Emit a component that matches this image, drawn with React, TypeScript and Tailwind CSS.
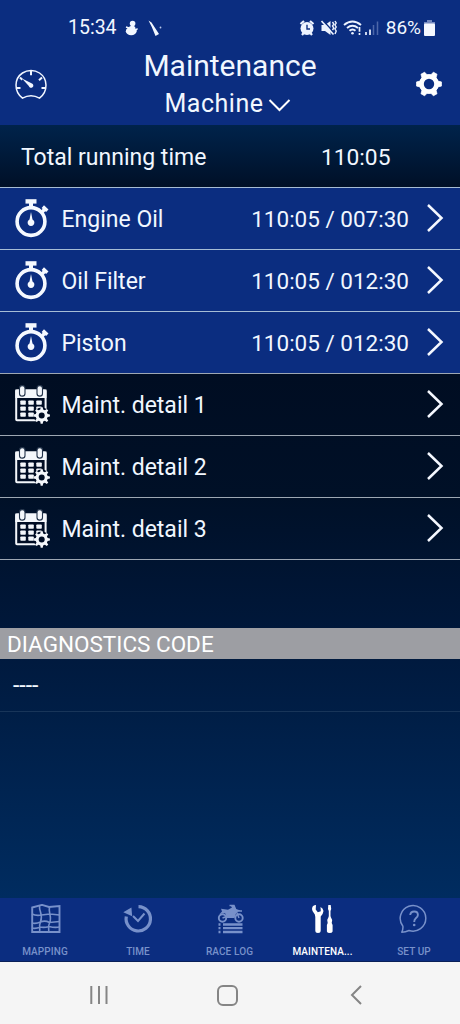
import React from "react";

const gearPoints = (cx: number, cy: number, teeth: number, outer: number, inner: number) => {
  const pts: string[] = [];
  const step = (Math.PI * 2) / teeth;
  for (let i = 0; i < teeth; i++) {
    const a = i * step;
    const corners: [number, number][] = [
      [inner, -0.3],
      [outer, -0.16],
      [outer, 0.16],
      [inner, 0.3],
    ];
    corners.forEach(([r, o]) => {
      pts.push(`${(cx + r * Math.cos(a + o * step)).toFixed(2)},${(cy + r * Math.sin(a + o * step)).toFixed(2)}`);
    });
  }
  return pts.join(" ");
};

function SnowmanIcon() {
  return (
    <svg className="ml-[8.5px] h-4 w-3.5" viewBox="0 0 14 16" fill="#f2f7ff">
      <circle cx="7.600" cy="3.600" r="2.800" />
      <path d="M4.500 6.500Q8 5 10.200 7Q11 9 9.500 10L4.500 9.500Q3 8 4.500 6.500Z" />
      <ellipse cx="6.200" cy="11.200" rx="5.400" ry="4" />
      <path d="M1 7L4 8M10 11L12.500 8.500" stroke="#f2f7ff" strokeWidth="1.500" />
    </svg>
  );
}

function WandIcon() {
  return (
    <svg className="ml-2 h-4 w-4" viewBox="0 0 16 16">
      <path d="M1.500 .5L4.500 2.500L12 14L8.500 16L4.800 7Z" fill="#f2f7ff" />
      <circle cx="13.500" cy="7.500" r=".9" fill="#b9c8ea" />
    </svg>
  );
}

function StatusIcons() {
  return (
    <svg className="h-5 w-20" viewBox="0 0 80 20" fill="none" stroke="#edf3ff">
      <circle cx="8" cy="10.500" r="6.500" fill="#edf3ff" stroke="none" />
      <path d="M1.500 6L5 3M14.500 6L11 3M3 17L4.800 14.700M13 17L11.200 14.700" strokeWidth="2.200" />
      <path d="M8 6.800V11H11" stroke="#0b2d80" strokeWidth="1.400" />
      <path d="M22.500 7H26L31.500 3V17L26 13H22.500Z" fill="#edf3ff" stroke="none" />
      <path d="M24 2.500L35 14.500" stroke="#0b2d80" strokeWidth="1.500" />
      <path d="M22.500 3L34.500 16.500" strokeWidth="1.700" />
      <path d="M33.500 4L34.800 6L33.500 8L34.800 10L33.500 12M36 3L37.200 5L36 7L37.200 9L36 11L37.200 13L36 16" strokeWidth="1.400" />
      <path d="M45 7Q53.500 0 62 7M48 10Q53.500 5.500 59 10M50.500 12.800Q53.500 10 56.500 12.800" strokeWidth="1.900" />
      <circle cx="53.500" cy="15.300" r="1.300" fill="#edf3ff" stroke="none" />
      <path d="M60.500 9V13.700M60.500 15V17" strokeWidth="1.700" />
      <path d="M67 14V17M71 11.500V17" strokeWidth="1.700" />
      <path d="M74.500 7V17M78.500 3.500V17" stroke="#4d67a9" strokeWidth="1.500" />
    </svg>
  );
}

function BatteryIcon() {
  return (
    <svg className="ml-[3px] h-4 w-[11px]" viewBox="0 0 11 16">
      <path d="M3 0H8V2H11V5H0V2H3Z" fill="#7388be" />
      <rect y="3.500" width="11" height="12.500" rx="1" fill="#f5f8ff" />
    </svg>
  );
}

function GaugeIcon() {
  return (
    <svg className="h-8 w-8" viewBox="0 0 32 32" fill="none" stroke="#f1f6ff" strokeWidth="1.500">
      <path d="M7.500 29.200C-1.500 22 -.8 9.500 7.500 4C12.500 .6 19.500 .6 24.500 4C32.800 9.500 33.500 22 24.500 29.200Q16 24.200 7.500 29.200Z" strokeLinejoin="round" />
      <path d="M16 2V6.300M1.500 19H5.500M26.500 19H30.500M5 8.500L7.300 10.700M27 8.500L24 11.300" strokeWidth="2" />
      <path d="M7 9.500L17 14.400A2.300 2.300 0 1 1 13.800 17Z" fill="#f1f6ff" stroke="none" />
    </svg>
  );
}

function SettingsIcon() {
  return (
    <svg className="h-[26px] w-[26px]" viewBox="0 0 26 26">
      <circle cx="13" cy="13" r="9.800" fill="white" />
      <polygon points={gearPoints(13, 13, 6, 12.6, 9.4)} fill="white" stroke="white" strokeWidth=".8" strokeLinejoin="round" />
      <circle cx="13" cy="13" r="5.200" fill="#0b2d80" />
    </svg>
  );
}

function StopwatchIcon() {
  return (
    <svg className="mb-0.5 h-10 w-[34px]" viewBox="0 0 34 40" fill="none" stroke="#f5f9ff">
      <circle cx="16" cy="23.500" r="13.900" strokeWidth="3.600" />
      <path d="M10.500 3.400H21.500" strokeWidth="4.400" />
      <path d="M16 5V10" strokeWidth="4" />
      <path d="M27.800 8.600L32.300 12.800M29 12L27 14" strokeWidth="3.500" />
      <path d="M16 14L17.500 21.500A3.400 3.400 0 1 1 14.500 21.500Z" fill="#f5f9ff" stroke="none" />
    </svg>
  );
}

function CalendarIcon() {
  return (
    <svg className="mb-px h-[39px] w-[35px]" viewBox="0 0 35 39">
      <rect x="1.200" y="5.500" width="29.400" height="29.800" rx=".8" fill="#000d24" stroke="#f4f7fb" strokeWidth="2" />
      <path d="M.3 4.500H31.500V13H.3Z" fill="#f4f7fb" />
      <rect x="4.500" y=".6" width="5.500" height="10.500" rx="2.700" fill="#f4f7fb" stroke="#23334a" strokeWidth="1.100" />
      <rect x="22" y=".6" width="5.500" height="10.500" rx="2.700" fill="#f4f7fb" stroke="#23334a" strokeWidth="1.100" />
      {[15.5, 21.5, 27.5].map((y) =>
        [5.3, 13.3, 21.3].map((x) => <rect key={`${x}-${y}`} x={x} y={y} width="5.500" height="4.200" rx=".8" fill="#f4f7fb" />)
      )}
      <circle cx="26.700" cy="30.500" r="8" fill="#000d24" />
      <polygon points={gearPoints(26.7, 30.5, 8, 8.3, 6.1)} fill="#f4f7fb" />
      <circle cx="26.700" cy="30.500" r="3" fill="#000d24" />
    </svg>
  );
}

function MapIcon() {
  return (
    <svg className="ml-0.5 h-[30px] w-[30px]" viewBox="0 0 30 30" fill="none" stroke="currentColor" strokeWidth="1.600">
      <path d="M1.200 3.500L11 .9L18 3L28.500 2V28H1.200Z" strokeWidth="1.900" />
      <path d="M8.500 2C8 8 12.500 10 9.500 18C7.500 22 9.500 25 8.500 28M18.500 3C17 9 21.500 13 18.500 19C16.500 23 18.500 26 17.500 28M1 10Q5 12 10.500 11L19 10L28.500 11M1 19Q5 20 9.500 18Q14 16 18.500 18.500L28.500 17.500M1 24Q5 25 9 23Q13 24 18 22.500Q24 24 28.500 23" />
    </svg>
  );
}

function TimeIcon() {
  return (
    <svg className="h-[30px] w-[30px]" viewBox="0 0 30 30" fill="none" stroke="currentColor">
      <path d="M15.500 2.600A12.200 12.200 0 1 1 3.300 12.500" strokeWidth="3.200" />
      <path d="M.3 8.200L8.400 3.500L9.200 12.200Z" fill="currentColor" stroke="none" />
      <path d="M10 12L15 17L21.500 9.500" strokeWidth="2" />
    </svg>
  );
}

function RaceIcon() {
  return (
    <svg className="ml-0.5 h-[30px] w-[30px]" viewBox="0 0 30 30" fill="none" stroke="currentColor">
      <circle cx="6.500" cy="14" r="3.700" strokeWidth="1.900" />
      <circle cx="23" cy="14" r="3.700" strokeWidth="1.900" />
      <path d="M5 4.800L12 5.800L16 3.500L14.500 1.500H17.500L20 5L24.500 6.500L20.500 8L18.500 14H11L9 9L3.500 10L6 7.500Z" fill="currentColor" stroke="none" />
      <path d="M13.500 1.500H18L23 14M12 12L6.500 14M20 7H26" strokeWidth="1.500" />
      <path d="M2.500 20.500H4.500M2.500 24.200H4.500M2.500 28H4.500M7 20.500H26.500M7 24.200H26.500M7 28H26.500" strokeWidth="2.300" />
    </svg>
  );
}

function ToolsIcon() {
  return (
    <svg className="mr-0.5 h-[30px] w-[30px]" viewBox="0 0 30 30" fill="currentColor">
      <path d="M9 1C4.800 1 4 5.500 6.500 8.500Q8.300 10 8.300 13V26.500Q8.300 29 11 29Q13.700 29 13.700 26.500V12.500Q16 10.500 16.500 7Q16 4 13.500 3L13.800 7.200L10.800 8.200L8.700 5.500Z" />
      <path d="M21.300 1H23.700L24.200 5L23.500 7V13H21.800V7L21 5Z" />
      <path d="M21.800 12.500H23.500L25.200 16L24.700 19L25.600 21V27.500Q25 29 22.800 29Q20.300 29 19.900 27.500V21L20.700 19L20.200 16Z" />
    </svg>
  );
}

function HelpIcon() {
  return (
    <svg className="h-[30px] w-[30px]" viewBox="0 0 30 30" fill="none" stroke="currentColor" strokeWidth="1.500">
      <path d="M3.900 22.200A12.800 12.800 0 1 1 10 26.500Q6.500 28 2.800 28.200Q4.200 25.500 3.900 22.200Z" strokeLinejoin="round" />
      <path d="M11.200 11Q11.600 7.500 15.200 7.500Q18.900 7.500 18.900 10.900Q18.900 12.600 16.800 14.200Q15.200 15.400 15.200 18" strokeWidth="1.900" />
      <circle cx="15.200" cy="21" r="1.300" fill="currentColor" stroke="none" />
    </svg>
  );
}

function Chevron() {
  return (
    <svg className="mb-0.5 h-[30px] w-[18px]" viewBox="0 0 18 30" fill="none" stroke="#f5f8ff" strokeWidth="2.500">
      <path d="M2 2L15.500 15L2 28" />
    </svg>
  );
}

interface Item {
  label: string;
  value?: string;
}

const items: Item[] = [
  { label: "Engine Oil", value: "110:05 / 007:30" },
  { label: "Oil Filter", value: "110:05 / 012:30" },
  { label: "Piston", value: "110:05 / 012:30" },
  { label: "Maint. detail 1" },
  { label: "Maint. detail 2" },
  { label: "Maint. detail 3" },
];

const tabs = [
  { label: "MAPPING", icon: <MapIcon />, style: "w-[90px] text-[#7891ca]" },
  { label: "TIME", icon: <TimeIcon />, style: "w-24 text-[#7891ca]" },
  { label: "RACE LOG", icon: <RaceIcon />, style: "w-[87px] text-[#7891ca]" },
  { label: "MAINTENA...", icon: <ToolsIcon />, style: "w-[99px] text-white" },
  { label: "SET UP", icon: <HelpIcon />, style: "w-[84px] text-[#7891ca]" },
];

export default function App() {
  return (
    <div className="flex h-[1024px] w-[460px] flex-col overflow-hidden bg-[#0b2d80] font-['Roboto',sans-serif] text-[#f1f7ff]">
      <header className="flex h-[125px] shrink-0 flex-col">
        <div className="flex h-11 items-center pt-3 pl-[68px] pr-[25px]">
          <span className="text-[19.5px] leading-6">15:34</span>
          <SnowmanIcon />
          <WandIcon />
          <div className="ml-auto flex items-center">
            <StatusIcons />
            <span className="ml-[7px] text-[19px] leading-6">86%</span>
            <BatteryIcon />
          </div>
        </div>
        <div className="flex h-[81px] items-start justify-between pl-[15px] pr-[18px]">
          <div className="pt-[25px]"><GaugeIcon /></div>
          <div className="flex flex-col items-center pr-[3px]">
            <h1 className="pt-[3px] text-[30px] leading-[38px]">Maintenance</h1>
            <div className="flex items-center pr-1 text-[25px] leading-[38px] tracking-[0.5px]">
              <span>Machine</span>
              <svg className="ml-[5px] mt-0.5 h-4 w-[23px]" viewBox="0 0 23 16" fill="none" stroke="white" strokeWidth="2">
                <path d="M1.500 3L11.500 13L21.500 3" />
              </svg>
            </div>
          </div>
          <div className="pt-[27px]"><SettingsIcon /></div>
        </div>
      </header>

      <main className="flex h-[773px] shrink-0 flex-col bg-[linear-gradient(#00234b_0px,#001027_62px,#000d22_250px,#001027_370px,#00183b_510px,#002c60_773px)]">
        <div className="flex h-[62px] items-center justify-between pt-1 pl-[21px] pr-[69.500px] text-[23px]">
          <span>Total running time</span>
          <span className="text-[22.800px]">110:05</span>
        </div>
        {items.map((item) => (
          <div key={item.label} className={item.value ? "flex h-[62px] items-center border-t border-[#a6bdd5] bg-[#0b2d80] pl-[15px] pr-4" : "flex h-[62px] items-center border-t border-[#9da7b3] pl-[15px] pr-4"}>
            <div className="flex w-[46.500px] shrink-0">{item.value ? <StopwatchIcon /> : <CalendarIcon />}</div>
            <span className="pt-1 text-[23px]">{item.label}</span>
            <span className="mr-[17px] ml-auto pt-0.5 text-[22.500px]">{item.value}</span>
            <Chevron />
          </div>
        ))}
        <div className="h-[69px] border-t border-[#9da7b3]" />
        <h2 className="flex h-[31px] items-center bg-[#9d9ea3] pt-[3px] pl-[7px] text-[22.500px] text-white">DIAGNOSTICS CODE</h2>
        <div className="flex h-[53px] items-center border-b border-[#183559] pt-[3px] pl-[13px] text-[23px]">----</div>
      </main>

      <nav className="flex h-16 shrink-0 border-b border-[#0a2058]">
        {tabs.map((tab) => (
          <div key={tab.label} className={`flex flex-col items-center pt-1.5 ${tab.style}`}>
            {tab.icon}
            <span className="mt-2.5 text-[10px] leading-4 font-medium tracking-[0.1px]">{tab.label}</span>
          </div>
        ))}
      </nav>

      <footer className="flex h-[62px] shrink-0 items-center bg-[#f5f5f5] pt-1 pl-[89px] text-[#858585]">
        <svg className="h-5 w-5" viewBox="0 0 20 20" stroke="currentColor" strokeWidth="2">
          <path d="M2.300 1V19M10 1V19M17.500 1V19" />
        </svg>
        <svg className="ml-[108px] h-[21px] w-[21px]" viewBox="0 0 21 21" fill="none" stroke="currentColor" strokeWidth="2">
          <rect x="1" y="1" width="19" height="19" rx="5" />
        </svg>
        <svg className="ml-[112px] h-5 w-3" viewBox="0 0 12 20" fill="none" stroke="currentColor" strokeWidth="2">
          <path d="M11 1L2 10L11 19" />
        </svg>
      </footer>
    </div>
  );
}
